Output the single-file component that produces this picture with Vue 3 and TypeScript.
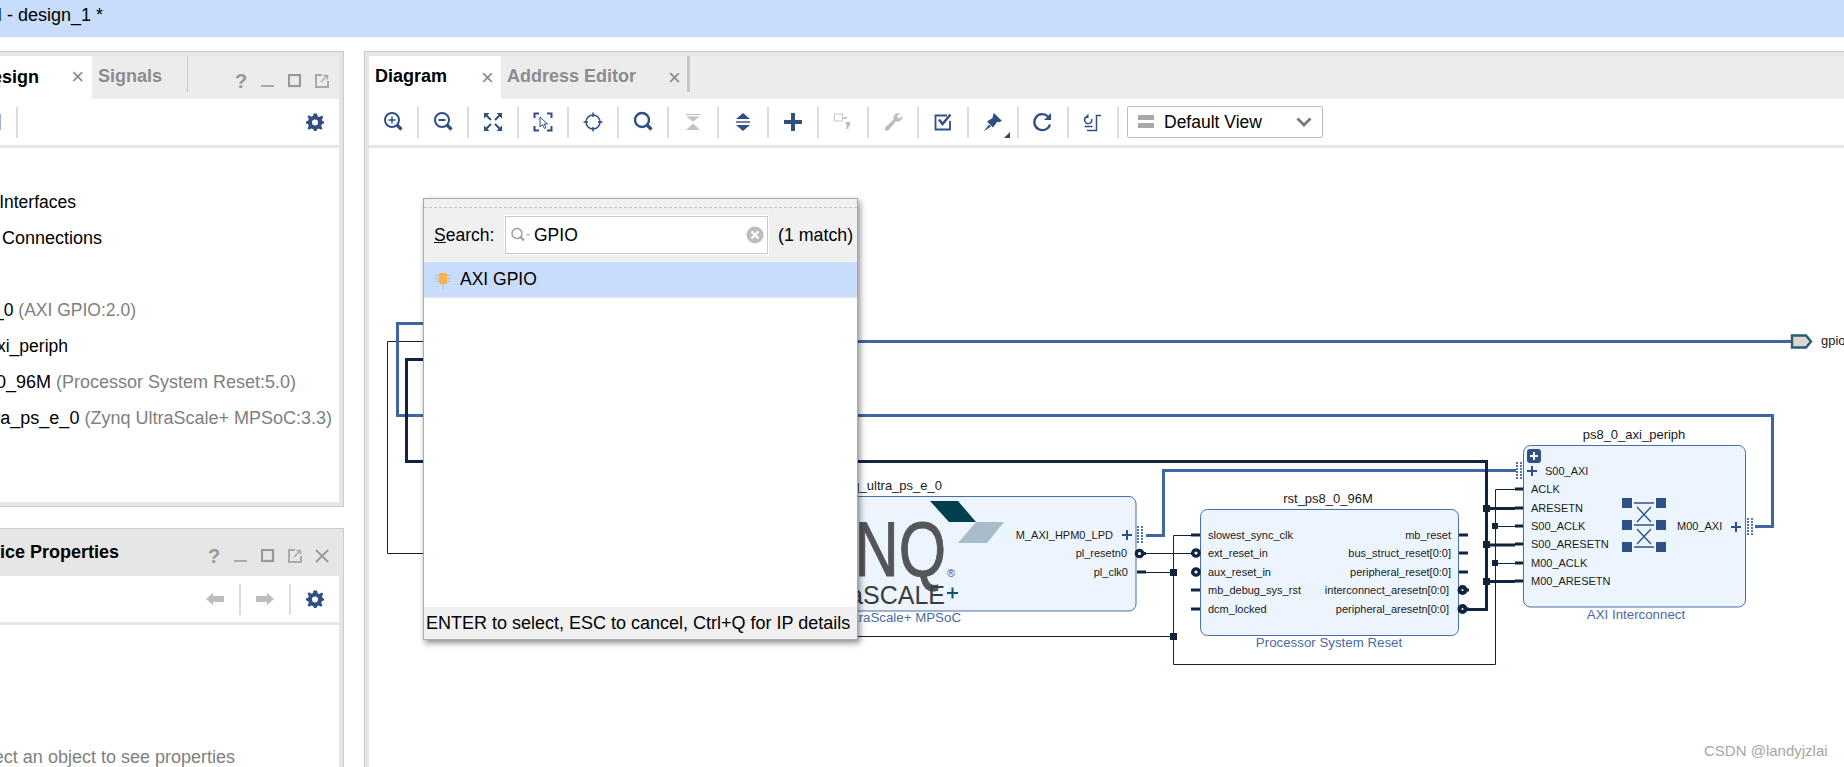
<script setup lang="ts">
interface TreeRow { name: string; type?: string; end: number; wide?: boolean }
const treeRows: TreeRow[] = [
  { name: 'External Interfaces', end: 76 },
  { name: 'Interface Connections', end: 102, wide: true },
  { name: '', end: 0 },
  { name: 'axi_gpio_0', type: '(AXI GPIO:2.0)', end: 136 },
  { name: 'ps8_0_axi_periph', end: 68 },
  { name: 'rst_ps8_0_96M', type: '(Processor System Reset:5.0)', end: 296, wide: true },
  { name: 'zynq_ultra_ps_e_0', type: '(Zynq UltraScale+ MPSoC:3.3)', end: 332, wide: true },
]

const rstLeft = [
  { t: 'slowest_sync_clk', y: 535, inv: false },
  { t: 'ext_reset_in', y: 553, inv: true },
  { t: 'aux_reset_in', y: 572, inv: true },
  { t: 'mb_debug_sys_rst', y: 590, inv: false },
  { t: 'dcm_locked', y: 609, inv: false },
]
const rstRight = [
  { t: 'mb_reset', y: 535, inv: false },
  { t: 'bus_struct_reset[0:0]', y: 553, inv: false },
  { t: 'peripheral_reset[0:0]', y: 572, inv: false },
  { t: 'interconnect_aresetn[0:0]', y: 590, inv: true },
  { t: 'peripheral_aresetn[0:0]', y: 609, inv: true },
]
const axiPorts = [
  { t: 'ACLK', y: 489, thick: false },
  { t: 'ARESETN', y: 508, thick: true },
  { t: 'S00_ACLK', y: 526, thick: false },
  { t: 'S00_ARESETN', y: 544, thick: true },
  { t: 'M00_ACLK', y: 563, thick: false },
  { t: 'M00_ARESETN', y: 581, thick: true },
]
const dots = (x: number, y: number): { x: number; y: number }[] => {
  const out: { x: number; y: number }[] = []
  for (let r = 0; r < 6; r++) for (let c = 0; c < 2; c++) out.push({ x: x + c * 4, y: y + r * 3 })
  return out
}
const portDots = [...dots(1137, 526), ...dots(1516, 462), ...dots(1747, 518)]
</script>

<template>
  <div class="app">
    <header class="titlebar"><span class="title">BLOCK DESIGN - design_1 *</span></header>
    <main class="workspace">
      <aside class="left">
        <section class="panel design">
          <div class="tabs">
            <div class="tab active left-tab"><span class="tab-clip">Block Design</span><span class="x">×</span></div>
            <div class="tab signals">Signals</div>
            <div class="tab-div"></div>
            <div class="win-icons">
              <span class="q">?</span>
              <svg width="14" height="14" viewBox="0 0 14 14"><rect x="0" y="11" width="13" height="2" fill="#aaa" /></svg>
              <svg width="14" height="14" viewBox="0 0 14 14"><rect x="1" y="1" width="11" height="11" fill="none" stroke="#999" stroke-width="2.2" /></svg>
              <svg width="14" height="14" viewBox="0 0 14 14"><path d="M7 1H1V13H13V7" fill="none" stroke="#aaa" stroke-width="2" /><path d="M6 8L12 2M8.5 1.5H12.5V5.5" fill="none" stroke="#aaa" stroke-width="1.4" /></svg>
            </div>
          </div>
          <div class="toolbar">
            <span class="stub"></span>
            <span class="sep first-sep"></span>
            <span class="grow"></span>
            <svg class="gear" width="18" height="18" viewBox="0 0 18 18"><use href="#gear" /></svg>
          </div>
          <ul class="tree">
            <li v-for="r in treeRows" :key="r.name + r.end" :class="{ wide: r.wide }" :style="{ width: r.end + 'px' }">
              <span>{{ r.name }}</span><span v-if="r.type" class="type">&nbsp;{{ r.type }}</span>
            </li>
          </ul>
        </section>

        <section class="panel props">
          <div class="props-head">
            <span class="props-title">Device Properties</span>
            <div class="win-icons">
              <span class="q">?</span>
              <svg width="14" height="14" viewBox="0 0 14 14"><rect x="0" y="11" width="13" height="2" fill="#aaa" /></svg>
              <svg width="14" height="14" viewBox="0 0 14 14"><rect x="1" y="1" width="11" height="11" fill="none" stroke="#999" stroke-width="2.2" /></svg>
              <svg width="14" height="14" viewBox="0 0 14 14"><path d="M7 1H1V13H13V7" fill="none" stroke="#aaa" stroke-width="2" /><path d="M6 8L12 2M8.5 1.5H12.5V5.5" fill="none" stroke="#aaa" stroke-width="1.4" /></svg>
              <svg width="14" height="14" viewBox="0 0 14 14"><path d="M1 1L13 13M13 1L1 13" stroke="#999" stroke-width="1.8" /></svg>
            </div>
          </div>
          <div class="toolbar props-bar">
            <span class="grow"></span>
            <svg class="arrow" width="18" height="14" viewBox="0 0 18 14"><path d="M0 7L7 1V4H18V10H7V13Z" fill="#bdbdbd" /></svg>
            <span class="sep"></span>
            <svg class="arrow" width="18" height="14" viewBox="0 0 18 14"><path d="M18 7L11 1V4H0V10H11V13Z" fill="#bdbdbd" /></svg>
            <span class="sep"></span>
            <svg class="gear" width="18" height="18" viewBox="0 0 18 18"><use href="#gear" /></svg>
          </div>
          <div class="props-body"><span class="props-msg">Select an object to see properties</span></div>
        </section>
      </aside>

      <section class="panel diagram">
        <div class="tabs">
          <div class="tab active d-tab">Diagram<span class="x">×</span></div>
          <div class="tab addr-tab">Address Editor<span class="x">×</span></div>
          <div class="tab-div thick"></div>
        </div>
        <div class="toolbar dtools">
          <div class="tool"><svg viewBox="0 0 24 24"><circle cx="11" cy="10" r="7" class="s" /><path d="M11 6.5V13.5M7.5 10H14.5" class="t" /><path d="M16 15L20.5 19.5" class="h" /></svg></div>
          <div class="tool"><svg viewBox="0 0 24 24"><circle cx="11" cy="10" r="7" class="s" /><path d="M7.5 10H14.5" class="s" /><path d="M16 15L20.5 19.5" class="h" /></svg></div>
          <div class="tool"><svg viewBox="0 0 24 24"><path d="M3 3H8.5L3 8.5ZM21 3V8.500L15.500 3ZM3 21V15.500L8.500 21ZM21 21H15.500L21 15.500Z" class="f" /><path d="M5 5L10 10M19 5L14 10M5 19L10 14M19 19L14 14" class="t2" /></svg></div>
          <div class="tool"><svg viewBox="0 0 24 24"><path d="M8 3.500H3.500V8M16 3.500H20.500V8M3.500 16V20.500H8M20.500 16V20.500H16" class="t2" /><path d="M9 7L9 17L11.500 14.500L13.500 18.500L15 17.500L13 14H16.500Z" fill="#fff" stroke="#2f4f85" stroke-width="1" /></svg></div>
          <div class="tool"><svg viewBox="0 0 24 24"><circle cx="12" cy="12" r="7" fill="none" stroke="#2f4f85" stroke-width="1.500" /><path d="M12 2.500V7M12 17V21.500M2.500 12H7M17 12H21.500" stroke="#2f4f85" stroke-width="1.500" /></svg></div>
          <div class="tool"><svg viewBox="0 0 24 24"><circle cx="11" cy="10" r="7" class="s3" /><path d="M16 15L20.500 19.500" class="h" /></svg></div>
          <div class="tool"><svg viewBox="0 0 24 24"><path d="M5 4.500H19" stroke="#c4c4c4" stroke-width="1.200" /><path d="M5 6.500H19L12 11.500ZM5 20H19L12 13.500Z" fill="#c4c4c4" /></svg></div>
          <div class="tool"><svg viewBox="0 0 24 24"><path d="M12 3L19 9H5ZM12 21L5 15H19Z" class="f" /><path d="M5 12H19" stroke="#2f4f85" stroke-width="1.400" /></svg></div>
          <div class="tool"><svg viewBox="0 0 24 24"><path d="M12 3V21M3 12H21" stroke="#2f4f85" stroke-width="4" /></svg></div>
          <div class="tool"><svg viewBox="0 0 24 24"><rect x="3.500" y="4" width="8" height="7" fill="none" stroke="#c8c8c8" /><rect x="12" y="7" width="4" height="2" fill="#c8c8c8" /><path d="M14 12H19V17L17.500 15.500L17.500 19H15.500V14.500Z" fill="#bbb" /></svg></div>
          <div class="tool"><svg viewBox="0 0 24 24"><path d="M21.500 6C21.800 10 18 12.500 14.800 11.300L7.500 20.200C5.500 22 2.500 19.500 4.300 17.300L12.700 9.500C11.500 6.200 14.500 2.500 19 3L15.800 6.300L17.800 8.800Z" fill="#bcbcbc" /></svg></div>
          <div class="tool"><svg viewBox="0 0 24 24"><path d="M16 5.500H4.500V19.500H19V11" fill="none" stroke="#2f4f85" stroke-width="1.800" /><path d="M8 9.500L11.500 14L19.500 4.500" fill="none" stroke="#2f4f85" stroke-width="2.400" /></svg></div>
          <div class="tool pin"><svg viewBox="0 0 24 24"><path d="M13 3L21 11L18.500 12L16 12L12 17.500L6 11.500L11.500 8L12 5ZM8 14.500L10 16.500L2.500 21.500Z" class="f" /></svg><i class="corner"></i></div>
          <div class="tool"><svg viewBox="0 0 24 24"><path d="M19 14.500A8 8 0 1 1 17 6.500" fill="none" stroke="#2f4f85" stroke-width="2.300" /><path d="M20 3V10H13Z" class="f" /></svg></div>
          <div class="tool"><svg viewBox="0 0 24 24"><path d="M6 20.500H15.500V5.500H20" fill="none" stroke="#2f4f85" stroke-width="1.500" /><path d="M10.500 9A3.500 3.500 0 1 1 5.500 7" fill="none" stroke="#2f4f85" stroke-width="1.500" /><path d="M7.500 3.500V8H3.500Z" class="f" /><path d="M3.500 16.500H11.500" stroke="#2f4f85" stroke-width="1.500" /></svg></div>
          <div class="view-select">
            <svg width="16" height="14" viewBox="0 0 16 14"><rect y="0" width="16" height="5" fill="#a9a9a9" /><rect y="8" width="16" height="5" fill="#a9a9a9" /></svg>
            <span>Default View</span>
            <svg class="chev" width="16" height="10" viewBox="0 0 16 10"><path d="M1.500 1.500L8 8L14.500 1.500" fill="none" stroke="#777" stroke-width="2.800" /></svg>
          </div>
        </div>

        <div class="canvas">
          <svg class="board" width="1475" height="619" viewBox="369 148 1475 619">
            <!-- thin wires -->
            <g fill="none" stroke="#10243e" stroke-width="1">
              <path d="M440 341.500H387.500V553.500H440" />
              <path d="M1146 553.500H1191" />
              <path d="M1146 572.500H1173.500M1191 535.500H1173.500V664.500H1495.500V489.500H1515" />
              <path d="M850 636.500H1173.500" />
              <path d="M1495.500 526.500H1515M1495.500 563.500H1515" />
            </g>
            <!-- blue wires -->
            <g fill="none" stroke="#4065a3" stroke-width="3">
              <path d="M440 323.500H397.500V415.500H1772.500V526.500H1755" />
              <path d="M850 341.500H1792" />
              <path d="M1146 535.500H1163.500V470.500H1516" />
            </g>
            <!-- thick dark wires -->
            <g fill="none" stroke="#10243e" stroke-width="3">
              <path d="M440 359.500H406.500V461.500H440" />
              <path d="M850 461.500H1486.500V609.500H1466" />
              <path d="M1486.500 508.500H1515M1486.500 545H1515M1486.500 581.500H1515" />
            </g>
            <g fill="#10243e">
              <rect x="1170" y="569" width="7" height="7" />
              <rect x="1170" y="633" width="7" height="7" />
              <rect x="1483" y="505" width="7" height="7" />
              <rect x="1483" y="541" width="7" height="7" />
              <rect x="1483" y="578" width="7" height="7" />
              <rect x="1492" y="523" width="6" height="6" />
              <rect x="1492" y="560" width="6" height="6" />
            </g>

            <!-- external port -->
            <path d="M1792 335.500H1806L1811 341.500L1806 347.500H1792Z" fill="#ddd5d0" stroke="#25606f" stroke-width="2.400" />
            <text x="1821" y="345" class="ttl">gpio</text>

            <!-- PS block -->
            <text x="942" y="490" class="ttl" text-anchor="end">zynq_ultra_ps_e_0</text>
            <rect x="800" y="496.500" width="336" height="114.500" rx="7" class="block" />
            <path d="M930 501H958L976 522H949Z" fill="#023f4e" />
            <path d="M976 522H1004L987 543H958Z" fill="#a8bccb" />
            <text transform="translate(946 576) scale(0.78 1)" class="logo" text-anchor="end">ZYNQ</text>
            <text x="947" y="577" class="reg">®</text>
            <text x="945" y="604" class="logo2" text-anchor="end">UltraSCALE</text>
            <path d="M947 593H958M952.500 587.500V598.500" stroke="#0b5566" stroke-width="2" />
            <text x="1113" y="539" class="dt" text-anchor="end">M_AXI_HPM0_LPD</text>
            <text x="1127" y="557" class="dt" text-anchor="end">pl_resetn0</text>
            <text x="1128" y="576" class="dt" text-anchor="end">pl_clk0</text>
            <path d="M1122 535H1132M1127 530V540" stroke="#2f4f85" stroke-width="2" />
            <text x="961" y="622" class="lbl" text-anchor="end">Zynq UltraScale+ MPSoC</text>
            <rect x="1137" y="570.500" width="9" height="3" fill="#10243e" />
            <circle cx="1139.500" cy="553.500" r="3.200" fill="#fff" stroke="#10243e" stroke-width="3.200" />
            <rect x="1143" y="552" width="3" height="3" fill="#10243e" />

            <!-- reset block -->
            <text x="1328" y="503" class="ttl" text-anchor="middle">rst_ps8_0_96M</text>
            <rect x="1200.500" y="509.500" width="258" height="126" rx="7" class="block" />
            <text x="1329" y="647" class="lbl" text-anchor="middle">Processor System Reset</text>
            <template v-for="p in rstLeft" :key="p.t">
              <text x="1208" :y="p.y + 4" class="dt">{{ p.t }}</text>
              <g v-if="p.inv">
                <rect x="1191" :y="p.y - 1" width="3" height="3" fill="#10243e" />
                <circle cx="1196" :cy="p.y" r="3.200" fill="#fff" stroke="#10243e" stroke-width="3.200" />
              </g>
              <rect v-else x="1191" :y="p.y - 1.500" width="9" height="3" fill="#10243e" />
            </template>
            <template v-for="p in rstRight" :key="p.t">
              <text :x="p.inv ? 1449 : 1451" :y="p.y + 4" class="dt" text-anchor="end">{{ p.t }}</text>
              <g v-if="p.inv">
                <circle cx="1462.500" :cy="p.y" r="3" fill="#fff" stroke="#10243e" stroke-width="4" />
                <rect x="1465" :y="p.y - 1.500" width="4" height="3" fill="#10243e" />
              </g>
              <rect v-else x="1459" :y="p.y - 1.500" width="9" height="3" fill="#10243e" />
            </template>

            <!-- AXI interconnect -->
            <text x="1634" y="439" class="ttl" text-anchor="middle">ps8_0_axi_periph</text>
            <rect x="1523.500" y="445.500" width="222" height="161.500" rx="7" class="block" />
            <text x="1636" y="619" class="lbl" text-anchor="middle">AXI Interconnect</text>
            <rect x="1527" y="449" width="14" height="14" rx="3" fill="#2e5186" />
            <path d="M1530 456H1538M1534 452V460" stroke="#fff" stroke-width="2" />
            <path d="M1527 471H1537M1532 466V476" stroke="#2f4f85" stroke-width="2" />
            <text x="1545" y="475" class="dt">S00_AXI</text>
            <template v-for="p in axiPorts" :key="p.t">
              <text x="1531" :y="p.y + 4" class="dt">{{ p.t }}</text>
              <rect x="1515" :y="p.y - 1.500" width="8" height="3" fill="#10243e" />
            </template>
            <g fill="#2e5186">
              <rect x="1622" y="498" width="10" height="10" /><rect x="1622" y="520" width="10" height="10" /><rect x="1622" y="542" width="10" height="10" />
              <rect x="1656" y="498" width="10" height="10" /><rect x="1656" y="520" width="10" height="10" /><rect x="1656" y="542" width="10" height="10" />
            </g>
            <path d="M1634 503H1654M1634 525H1654M1634 547H1654M1637 507L1651 522M1651 507L1637 522M1637 529L1651 544M1651 529L1637 544" stroke="#2e5186" stroke-width="1.400" fill="none" />
            <text x="1677" y="530" class="dt">M00_AXI</text>
            <path d="M1731 527H1741M1736 522V532" stroke="#2f4f85" stroke-width="2" />

            <rect v-for="d in portDots" :key="`${d.x}-${d.y}`" :x="d.x" :y="d.y" width="2" height="2" fill="#4c78b8" />
          </svg>

          <div class="dialog">
            <div class="grip"></div>
            <div class="search-row">
              <label><u>S</u>earch:</label>
              <div class="search-box">
                <svg width="20" height="16" viewBox="0 0 20 16"><circle cx="6" cy="6.500" r="5" fill="none" stroke="#9a9a9a" stroke-width="1.400" /><path d="M9.500 10L13 13.500" stroke="#9a9a9a" stroke-width="2" /><path d="M15 7H19L17 9Z" fill="#aaa" /></svg>
                <span class="q-text">GPIO</span>
                <span class="grow"></span>
                <svg width="18" height="18" viewBox="0 0 18 18"><circle cx="9" cy="9" r="8.500" fill="#bdbdbd" /><path d="M5.500 5.500L12.500 12.500M12.500 5.500L5.500 12.500" stroke="#fff" stroke-width="2.400" /></svg>
              </div>
              <span class="match">(1 match)</span>
            </div>
            <div class="result">
              <svg width="16" height="18" viewBox="0 0 16 18"><path d="M0 4.500H16M0 7.500H16M0 10.500H16M8 13V18" stroke="#c0bfb8" stroke-width="1.100" /><rect x="4" y="2" width="8" height="11" rx="1" fill="#f7b347" /></svg>
              <span>AXI GPIO</span>
            </div>
            <div class="list"></div>
            <div class="hint">ENTER to select, ESC to cancel, Ctrl+Q for IP details</div>
          </div>
          <div class="watermark">CSDN @landyjzlai</div>
        </div>
      </section>
    </main>

    <svg class="defs" width="0" height="0">
      <defs>
        <g id="gear">
          <path d="M9 .5L11 .5 11.600 3.200 13.500 4 15.800 2.500 17.300 4 15.800 6.400 16.500 8 18 8.500V10.500L16 11 15.200 13 16.500 15.300 15 16.800 12.800 15.500 11 16.200 10.500 18H8L7.300 16.200 5.300 15.500 3 16.800 1.500 15.300 2.800 13 2 11 0 10.500V8.500L2 7.800 2.800 6 1.500 3.800 3 2.300 5.300 3.700 7 3 7.500 .5Z" fill="#2f4f85" />
          <circle cx="9" cy="9.500" r="3" fill="#fff" />
        </g>
      </defs>
    </svg>
  </div>
</template>

<style>
html, body { margin: 0; background: #fff; overflow: hidden; }
</style>

<style scoped>
.app {
  width: 1844px;
  height: 767px;
  overflow: hidden;
  display: flex;
  flex-direction: column;
  background: #fff;
  font-family: "Liberation Sans", Arial, sans-serif;
  font-size: 17.5px;
  color: #000;
}
.titlebar {
  flex: none;
  height: 37px;
  background: #c8dcfb;
  display: flex;
  align-items: center;
  white-space: nowrap;
  padding-bottom: 7px;
  box-sizing: border-box;
}
.title { flex: none; margin-left: -133px; font-size: 18px; }
.workspace {
  flex: 1;
  display: flex;
  gap: 20px;
  padding-top: 14px;
  min-height: 0;
}
.left {
  flex: none;
  width: 344px;
  display: flex;
  flex-direction: column;
  gap: 21px;
  min-height: 0;
}
.panel {
  box-sizing: border-box;
  background: #e6e6e6;
  border: 1px solid #cccccc;
  overflow: hidden;
  display: flex;
  flex-direction: column;
}
.design {
  height: 456px;
  flex: none;
  border-left: none;
  padding: 4px 4px 4px 0;
}
.props {
  flex: 1;
  border-left: none;
  border-bottom: none;
  padding-right: 4px;
  min-height: 0;
}
.tabs {
  flex: none;
  height: 43px;
  background: #ececec;
  display: flex;
  align-items: stretch;
  font-weight: bold;
  font-size: 18px;
}
.tab { display: flex; align-items: center; box-sizing: border-box; position: relative; }
.tab.active { background: #fff; }
.left-tab { width: 92px; justify-content: flex-end; overflow: hidden; }
.tab-clip { position: absolute; right: 53px; white-space: nowrap; top: 11px; }
.x { position: absolute; font-weight: normal; color: #888; font-size: 22px; line-height: 20px; }
.left-tab .x { right: 8px; top: 11px; }
.signals { color: #8c8c8c; margin-left: 6px; width: 89px; padding-bottom: 2px; }
.tab-div { width: 1px; margin: 0 0 7px; background: #c9c9c9; }
.tab-div.thick { width: 3px; background: #c6c6c6; margin: 0 0 7px; }
.win-icons {
  margin-left: auto;
  display: flex;
  align-items: center;
  gap: 13px;
  padding-right: 10px;
  padding-top: 7px;
}
.q { width: 14px; text-align: center; color: #999; font-weight: bold; font-size: 20px; line-height: 14px; }
.toolbar {
  flex: none;
  height: 46px;
  background: #fff;
  display: flex;
  align-items: center;
  box-sizing: border-box;
}
.stub { width: 1px; height: 16px; background: #9fb0c9; }
.sep { width: 2px; height: 31px; background: #dcdcdc; flex: none; }
.first-sep { margin-left: 15px; }
.grow { flex: 1; }
.gear { margin-right: 15px; flex: none; }
.tree {
  list-style: none;
  margin: 3px 0 0;
  padding: 36px 0 0;
  flex: 1;
  background: #fff;
  overflow: hidden;
}
.tree li {
  height: 36px;
  display: flex;
  align-items: center;
  justify-content: flex-end;
  white-space: nowrap;
}
.tree li.wide { font-size: 18px; }
.tree li span { flex: none; }
.type { color: #808080; }

.props-head {
  flex: none;
  height: 47px;
  display: flex;
  align-items: center;
  position: relative;
}
.props-head .win-icons { padding-top: 6px; }
.props-title {
  position: absolute;
  right: 220px;
  top: 13px;
  font-weight: bold;
  font-size: 18px;
  white-space: nowrap;
}
.props-bar .sep { margin: 0 15px; }
.props-bar .gear { margin-left: 0; }
.props-body {
  margin-top: 3px;
  flex: 1;
  background: #fff;
  display: flex;
  align-items: flex-end;
  white-space: nowrap;
  overflow: hidden;
  color: #808080;
  width: 100%;
  position: relative;
}
.props-msg { position: absolute; right: 104px; bottom: 0; line-height: 20px; font-size: 18px; }

.diagram {
  flex: none;
  width: 1500px;
  height: 716px;
  border-right: none;
  border-bottom: none;
  padding: 4px 0 0 4px;
}
.d-tab { width: 132px; padding-left: 6px; padding-bottom: 3px; }
.d-tab .x { left: 112px; top: 12px; }
.addr-tab { color: #8c8c8c; width: 186px; padding-left: 6px; padding-bottom: 3px; }
.addr-tab .x { left: 167px; top: 12px; }
.dtools { padding-left: 0; }
.tool {
  flex: none;
  width: 50px;
  height: 31px;
  box-sizing: border-box;
  border-right: 2px solid #dcdcdc;
  display: flex;
  align-items: center;
  justify-content: center;
  position: relative;
}
.tool svg { width: 24px; height: 24px; }
.pin .corner {
  position: absolute;
  right: 7px;
  bottom: 0;
  border-left: 6px solid transparent;
  border-bottom: 6px solid #444;
}
.s { fill: none; stroke: #2f4f85; stroke-width: 2; }
.s3 { fill: none; stroke: #2f4f85; stroke-width: 2.400; }
.t { fill: none; stroke: #2f4f85; stroke-width: 1.500; }
.t2 { fill: none; stroke: #2f4f85; stroke-width: 2; }
.h { fill: none; stroke: #2f4f85; stroke-width: 3.200; }
.f { fill: #2f4f85; }
.view-select {
  flex: none;
  margin-left: 8px;
  width: 196px;
  height: 32px;
  box-sizing: border-box;
  border: 1px solid #bdbdbd;
  border-radius: 2px;
  display: flex;
  align-items: center;
  padding-left: 10px;
  background: #fff;
}
.view-select span { margin-left: 10px; }
.chev { margin-left: auto; margin-right: 10px; }

.canvas {
  flex: 1;
  margin-top: 3px;
  background: #fff;
  position: relative;
  overflow: hidden;
}
.board { display: block; }
.dt { font-size: 11px; fill: #1a1a1a; font-family: "Liberation Sans", Arial, sans-serif; }
.ttl { font-size: 13px; fill: #1a1a1a; font-family: "Liberation Sans", Arial, sans-serif; }
.lbl { font-size: 13.300px; fill: #4a6aa8; font-family: "Liberation Sans", Arial, sans-serif; }
.block { fill: #ecf4fd; stroke: #4a6ea8; stroke-width: 1; }
.logo { font-size: 78px; fill: #55565a; stroke: #55565a; stroke-width: 1; font-family: "Liberation Sans", Arial, sans-serif; }
.reg { font-size: 11px; fill: #55565a; font-family: "Liberation Sans", Arial, sans-serif; }
.logo2 { font-size: 25px; fill: #3b3c40; font-family: "Liberation Sans", Arial, sans-serif; }
.dialog {
  position: absolute;
  left: 54px;
  top: 50px;
  width: 435px;
  height: 442px;
  box-sizing: border-box;
  background: #f0f0f0;
  border: 1px solid #a8a8a8;
  box-shadow: 2px 3px 6px rgba(0, 0, 0, 0.45);
  display: flex;
  flex-direction: column;
}
.grip { flex: none; height: 9px; border-bottom: 1px dashed #c4c4c4; box-sizing: border-box; }
.search-row {
  flex: none;
  height: 54px;
  display: flex;
  align-items: center;
  padding-left: 10px;
}
.search-row label { flex: none; width: 71px; }
.search-box {
  flex: none;
  width: 263px;
  height: 38px;
  box-sizing: border-box;
  background: #fff;
  border: 1px solid #c8c8c8;
  outline: 1px solid #fff;
  display: flex;
  align-items: center;
  padding: 0 3px 0 5px;
  gap: 2px;
}
.q-text { margin-left: 1px; }
.match { margin-left: 10px; white-space: nowrap; font-size: 17.800px; }
.result {
  flex: none;
  height: 36px;
  background: #c8dcfb;
  display: flex;
  align-items: center;
  padding-left: 11px;
  gap: 9px;
  border-bottom: 1px solid #e6e6e6;
  box-sizing: border-box;
}
.list { flex: 1; background: #fff; }
.hint { flex: none; height: 32px; display: flex; align-items: center; padding-left: 2px; white-space: nowrap; font-size: 18px; }
.watermark {
  position: absolute;
  left: 1335px;
  top: 594px;
  font-size: 15px;
  color: #a6a6a6;
  white-space: nowrap;
}
.defs { position: absolute; }
</style>
